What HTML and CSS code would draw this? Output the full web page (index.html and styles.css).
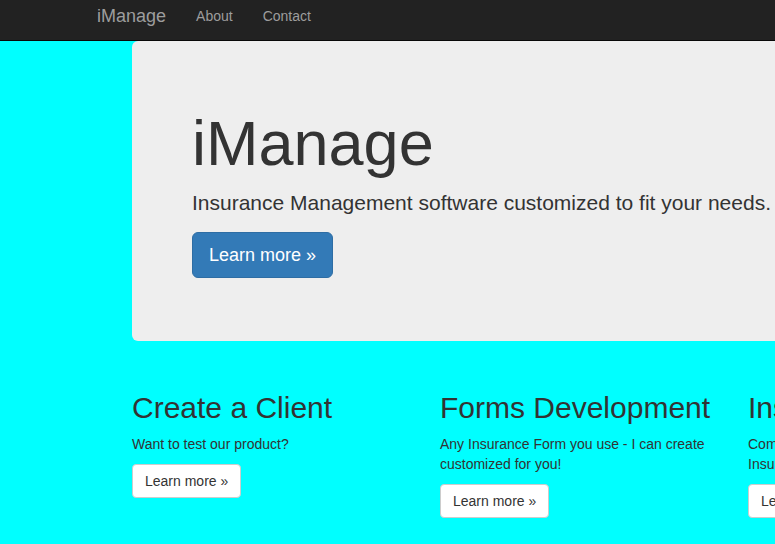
FILE: index.html
```html
<!DOCTYPE html>
<html lang="en">
<head>
<meta charset="utf-8">
<title>iManage</title>
<link rel="stylesheet" href="styles.css">
</head>
<body>
<nav class="navbar">
  <div class="navbar-inner">
    <a class="brand" href="#">iManage</a>
    <ul class="nav">
      <li><a href="#">About</a></li>
      <li><a href="#">Contact</a></li>
    </ul>
  </div>
</nav>
<main class="container">
  <section class="jumbotron">
    <h1>iManage</h1>
    <p class="lead">Insurance Management software customized to fit your needs.</p>
    <p class="cta"><a class="btn btn-primary btn-lg" href="#">Learn more &raquo;</a></p>
  </section>
  <div class="row">
    <div class="col">
      <h2>Create a Client</h2>
      <p>Want to test our product?</p>
      <p><a class="btn btn-default" href="#">Learn more &raquo;</a></p>
    </div>
    <div class="col">
      <h2>Forms Development</h2>
      <p>Any Insurance Form you use - I can create customized for you!</p>
      <p><a class="btn btn-default" href="#">Learn more &raquo;</a></p>
    </div>
    <div class="col">
      <h2>Insurance Tools</h2>
      <p>Compare and manage policies from every Insurance company.</p>
      <p><a class="btn btn-default" href="#">Learn more &raquo;</a></p>
    </div>
  </div>
</main>
</body>
</html>
```
FILE: styles.css
```css
html, body {
  margin: 0;
  padding: 0;
  overflow: hidden;
}
body {
  background: #00ffff;
  color: #333;
  font-family: "Liberation Sans", Arial, Helvetica, sans-serif;
  font-size: 14px;
  line-height: 1.42857143;
  width: 775px;
  height: 544px;
}
* { box-sizing: border-box; }
a { text-decoration: none; }

.navbar {
  background: #222;
  border-bottom: 1px solid #080808;
  height: 41px;
}
.navbar-inner {
  display: flex;
  align-items: flex-start;
  padding-left: 82px;
}
.brand {
  font-size: 18px;
  line-height: 20px;
  padding: 6px 15px 0;
  color: #9d9d9d;
}
.nav {
  display: flex;
  list-style: none;
  margin: 0;
  padding: 0;
}
.nav a {
  display: block;
  padding: 6px 15px 0;
  line-height: 20px;
  color: #9d9d9d;
}

.container {
  width: 924px;
  margin-left: 132px;
}
.jumbotron {
  background: #eee;
  border-radius: 6px;
  padding: 48px 60px;
  margin-bottom: 30px;
}
.jumbotron h1 {
  font-size: 63px;
  font-weight: 500;
  line-height: 1.1;
  margin: 20px 0 10px;
}
.jumbotron p {
  font-size: 21px;
  font-weight: 200;
  margin: 0 0 14px;
}
.jumbotron .cta {
  margin-bottom: 15px;
  line-height: 1;
}

.btn {
  display: inline-block;
  border: 1px solid transparent;
  font-weight: 400;
  vertical-align: middle;
}
.btn-lg {
  padding: 10px 16px;
  font-size: 18px;
  line-height: 1.3333333;
  border-radius: 6px;
}
.btn-primary {
  background: #337ab7;
  border-color: #2e6da4;
  color: #fff;
}
.btn-default {
  background: #fff;
  border-color: #ccc;
  color: #333;
  padding: 6px 12px;
  font-size: 14px;
  line-height: 20px;
  border-radius: 4px;
}

.row {
  display: grid;
  grid-template-columns: repeat(3, 308px);
  margin: 0 -15px;
}
.col {
  padding: 0 15px;
}
.col h2 {
  font-size: 30px;
  font-weight: 500;
  line-height: 1.1;
  margin: 20px 0 10px;
}
.col p {
  margin: 0 0 10px;
}
```
